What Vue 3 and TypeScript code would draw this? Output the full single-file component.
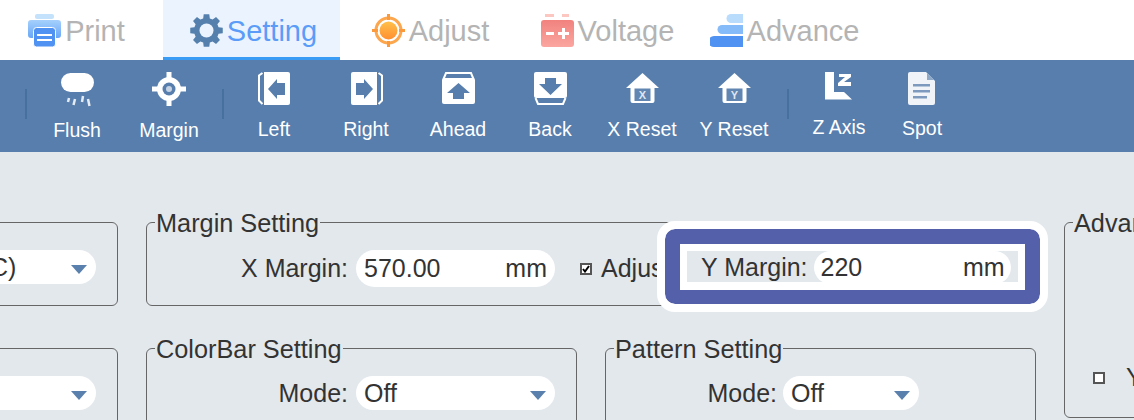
<script setup lang="ts">
const tabs = [
  { name: 'Print', icon: 'print' },
  { name: 'Setting', icon: 'gear' },
  { name: 'Adjust', icon: 'target' },
  { name: 'Voltage', icon: 'battery' },
  { name: 'Advance', icon: 'stack' },
]

const activeTab = 'Setting'

// one outline for the gear, eight teeth round a hub
function gearPath(): string {
  const pts: string[] = []
  const teeth = 8
  for (let i = 0; i < teeth; i++) {
    const a = (i * 2 * Math.PI) / teeth
    for (const [r, d] of [[12.5, -0.27], [16.5, -0.17], [16.5, 0.17], [12.5, 0.27]]) {
      pts.push(`${(16.5 + r * Math.cos(a + d)).toFixed(2)} ${(16.5 + r * Math.sin(a + d)).toFixed(2)}`)
    }
  }
  return 'M' + pts.join('L') + 'Z'
}
const gear = gearPath()
</script>

<template>
  <div class="page">
    <nav class="tabs">
      <div v-for="t in tabs" :key="t.name" class="tab" :class="{ active: t.name === activeTab }">
        <svg class="tab-icon" viewBox="0 0 33 33" width="33" height="33">
          <defs>
            <linearGradient id="bodyGrad" x1="0" y1="0" x2="0" y2="1">
              <stop offset="0" stop-color="#a5d0fc" />
              <stop offset="1" stop-color="#68a6f7" />
            </linearGradient>
            <linearGradient id="orangeGrad" x1="0" y1="0" x2="0" y2="1">
              <stop offset="0" stop-color="#ffc04a" />
              <stop offset="1" stop-color="#ff8f30" />
            </linearGradient>
            <linearGradient id="redGrad" x1="0" y1="0" x2="0" y2="1">
              <stop offset="0" stop-color="#f1827e" />
              <stop offset="1" stop-color="#fba6a0" />
            </linearGradient>
          </defs>
          <template v-if="t.icon === 'print'">
            <rect x="7" y="0" width="19" height="5" rx="2" fill="#c4e2fc" />
            <path d="M3 6h27a3 3 0 0 1 3 3v12a3 3 0 0 1-3 3h-3v-6H6v6H3a3 3 0 0 1-3-3V9a3 3 0 0 1 3-3z" fill="url(#bodyGrad)" />
            <rect x="5.500" y="13.500" width="22" height="19.500" rx="3" fill="#4f92f2" stroke="#fff" />
            <rect x="9" y="20" width="15" height="2" fill="#fff" />
            <rect x="9" y="25" width="15" height="2" fill="#fff" />
          </template>
          <template v-else-if="t.icon === 'gear'">
            <path :d="gear" fill="#5580ad" />
            <circle cx="16.500" cy="16.500" r="7" fill="#ebf4fe" />
          </template>
          <template v-else-if="t.icon === 'target'">
            <circle cx="16.500" cy="16.500" r="12.500" fill="none" stroke="#fca64e" stroke-width="3" />
            <circle cx="16.500" cy="16.500" r="9" fill="url(#orangeGrad)" />
            <path d="M15 0h3v6h-3zM15 27h3v6h-3zM0 15h6v3H0zM27 15h6v3h-6z" fill="#fb9a3c" />
          </template>
          <template v-else-if="t.icon === 'battery'">
            <rect x="4" y="0" width="9" height="3" fill="#fcc7c0" />
            <rect x="21" y="0" width="7" height="3" fill="#fcc7c0" />
            <rect x="0" y="6" width="33" height="27" rx="3" fill="url(#redGrad)" />
            <rect x="5" y="18" width="8" height="3" fill="#fff" />
            <path d="M17 18h4v-4h3v4h4v3h-4v4h-3v-4h-4z" fill="#fff" />
          </template>
          <template v-else>
            <path d="M21 0h12v9H21a4.500 4.500 0 0 1 0-9z" fill="#b9dcfd" />
            <path d="M12 11h21v9H12a4.500 4.500 0 0 1 0-9z" fill="#86bbf9" />
            <path d="M4 22h29v11H4a4 4 0 0 1 0-11z" fill="#4f92f2" />
          </template>
        </svg>
        <span class="tab-name">{{ t.name }}</span>
      </div>
    </nav>

    <div class="toolbar">
      <i class="sep"></i>
      <div class="tool">
        <svg viewBox="0 0 33 36" width="33" height="36">
          <rect x="0" y="2" width="33" height="19" rx="9.500" fill="#fff" />
          <path d="M8 27l-1 4M14 28l-1.500 6M22 25l-1 6M27 28l1.500 7" stroke="#e4ebf3" stroke-width="2.500" fill="none" />
        </svg>
        <span class="low">Flush</span>
      </div>
      <div class="tool">
        <svg viewBox="0 0 36 36" width="36" height="36">
          <circle cx="18" cy="18" r="12" fill="#fff" />
          <circle cx="18" cy="18" r="6.500" fill="#577ead" />
          <circle cx="18" cy="18" r="3" fill="#c5d3e4" />
          <path d="M15.500 1h5v7h-5zM15.500 28h5v7h-5zM1 15.500h7v5H1zM28 15.500h7v5h-7z" fill="#fff" />
        </svg>
        <span class="low">Margin</span>
      </div>
      <i class="sep"></i>
      <div class="tool">
        <svg viewBox="0 0 33 36" width="33" height="36">
          <path d="M6 1h24a2 2 0 0 1 2 2v29a2 2 0 0 1-2 2H6z" fill="#fff" />
          <path d="M4.500 2L1 4.500v25L4.500 33" fill="none" stroke="#fff" stroke-width="2" />
          <path d="M10 18l9-10v4h8v12h-8v4z" fill="#577ead" />
        </svg>
        <span>Left</span>
      </div>
      <div class="tool">
        <svg viewBox="0 0 33 36" width="33" height="36">
          <path d="M27 1H3a2 2 0 0 0-2 2v29a2 2 0 0 0 2 2h24z" fill="#fff" />
          <path d="M28.500 2L32 4.500v25L28.500 33" fill="none" stroke="#fff" stroke-width="2" />
          <path d="M23 18l-9-10v4H6v12h8v4z" fill="#577ead" />
        </svg>
        <span>Right</span>
      </div>
      <div class="tool">
        <svg viewBox="0 0 33 36" width="33" height="36">
          <path d="M1.500 8L4 2h25l2.500 6" fill="none" stroke="#fff" stroke-width="2" />
          <path d="M0 9a2 2 0 0 1 2-2h29a2 2 0 0 1 2 2v22a2 2 0 0 1-2 2H2a2 2 0 0 1-2-2z" fill="#fff" />
          <path d="M16.500 12L28 22h-6v6H11v-6H5z" fill="#577ead" />
        </svg>
        <span>Ahead</span>
      </div>
      <div class="tool">
        <svg viewBox="0 0 33 36" width="33" height="36">
          <path d="M1.500 27L4 33h25l2.500-6" fill="none" stroke="#fff" stroke-width="2" />
          <path d="M0 3a2 2 0 0 1 2-2h29a2 2 0 0 1 2 2v22a2 2 0 0 1-2 2H2a2 2 0 0 1-2-2z" fill="#fff" />
          <path d="M16.500 24L5 13h6V7h11v6h6z" fill="#577ead" />
        </svg>
        <span>Back</span>
      </div>
      <div class="tool">
        <svg viewBox="0 0 33 36" width="33" height="36">
          <path d="M16.500 2L33 17h-4.500v13a2 2 0 0 1-2 2h-20a2 2 0 0 1-2-2V17H0z" fill="#fff" />
          <rect x="8.500" y="17.500" width="16" height="12.500" fill="#6286b2" />
          <text x="16.500" y="28" class="badge">X</text>
        </svg>
        <span>X Reset</span>
      </div>
      <div class="tool">
        <svg viewBox="0 0 33 36" width="33" height="36">
          <path d="M16.500 2L33 17h-4.500v13a2 2 0 0 1-2 2h-20a2 2 0 0 1-2-2V17H0z" fill="#fff" />
          <rect x="8.500" y="17.500" width="16" height="12.500" fill="#6286b2" />
          <text x="16.500" y="28" class="badge">Y</text>
        </svg>
        <span>Y Reset</span>
      </div>
      <i class="sep"></i>
      <div class="tool">
        <svg viewBox="0 0 28 36" width="28" height="36">
          <path d="M0 1h9v20h10l8 7.500H0z" fill="#fff" />
          <path d="M14 3h12v3l-7 5h7v4H13v-3l7-6h-6z" fill="#fff" />
        </svg>
        <span class="up">Z Axis</span>
      </div>
      <div class="tool short">
        <svg viewBox="0 0 28 36" width="28" height="36">
          <path d="M2 1h16l9 9v22a2 2 0 0 1-2 2H2a2 2 0 0 1-2-2V3a2 2 0 0 1 2-2z" fill="#f0f3f8" />
          <path d="M19 2l7 7h-7z" fill="#8ea8c8" />
          <path d="M5 13h17v2.500H5zM5 19h17v2.500H5zM5 25h14v2.500H5z" fill="#7d99bd" />
        </svg>
        <span>Spot</span>
      </div>
    </div>

    <main class="content">
      <fieldset class="panel col-left">
        <legend>Model</legend>
        <div class="row">
          <div class="pill select left-pill"><span>C)</span><b class="arrow"></b></div>
        </div>
      </fieldset>

      <fieldset class="panel col-wide">
        <legend>Margin Setting</legend>
        <div class="row">
          <label class="field-label">X Margin:</label>
          <div class="pill number"><span>570.00</span><span>mm</span></div>
          <span class="check on">
            <svg viewBox="0 0 8 8" width="8" height="8"><path d="M1 4l2 2.500L7 1" fill="none" stroke="#000" stroke-width="2" /></svg>
          </span>
          <span class="check-text">Adjust</span>
        </div>
      </fieldset>

      <fieldset class="panel col-adv">
        <legend>Advanced Setting</legend>
        <div class="adv-row">
          <span class="check off"></span>
          <span class="adv-text">Y Offset</span>
        </div>
      </fieldset>

      <fieldset class="panel col-left">
        <legend>Mode</legend>
        <div class="row">
          <div class="pill select left-pill"><span></span><b class="arrow"></b></div>
        </div>
      </fieldset>

      <fieldset class="panel">
        <legend>ColorBar Setting</legend>
        <div class="row">
          <label class="field-label">Mode:</label>
          <div class="pill select wide"><span>Off</span><b class="arrow"></b></div>
        </div>
      </fieldset>

      <fieldset class="panel">
        <legend>Pattern Setting</legend>
        <div class="row">
          <label class="field-label short-label">Mode:</label>
          <div class="pill select narrow"><span>Off</span><b class="arrow"></b></div>
        </div>
      </fieldset>

      <div class="highlight">
        <div class="highlight-inner">
          <div class="y-row">
            <label>Y Margin:</label>
            <div class="pill y-pill"><span>220</span><span>mm</span></div>
          </div>
        </div>
      </div>
    </main>
  </div>
</template>

<style>
html,
body {
  margin: 0;
  overflow: hidden;
}
</style>

<style scoped>
.page {
  width: 1134px;
  height: 420px;
  overflow: hidden;
  background: #e3e8ed;
  font-family: "Liberation Sans", Arial, sans-serif;
  color: #333;
}

.tabs {
  display: flex;
  height: 60px;
  margin-left: -14px;
  background: #fff;
}

.tab {
  box-sizing: border-box;
  flex: 0 0 177px;
  height: 60px;
  display: flex;
  align-items: center;
  justify-content: center;
  gap: 4px;
  padding: 1px 0 0 4px;
  font-size: 29px;
  color: #b4b4b4;
}

.tab.active {
  background: #ebf4fe;
  box-shadow: inset 0 -3px 0 #3a9cf5;
  color: #5a9cf8;
}

.tab-icon {
  flex: none;
}

.tab-name {
  padding-top: 2px;
}

.toolbar {
  box-sizing: border-box;
  height: 92px;
  background: #577ead;
  display: flex;
  align-items: flex-start;
  padding-left: 18px;
  color: #fff;
  font-size: 19.5px;
}

.sep {
  flex: none;
  width: 2px;
  height: 30px;
  margin: 29px 4px 0 7px;
  background: #48709f;
}

.tool {
  flex: 0 0 92px;
  display: flex;
  flex-direction: column;
  align-items: center;
  padding-top: 11px;
}

.tool svg {
  display: block;
}

.tool span {
  margin-top: 11px;
  line-height: 22px;
}

.tool span.low {
  margin-top: 12px;
}

.tool span.up {
  margin-top: 9px;
}

.tool.short {
  flex-basis: 74px;
}

.tool.short span {
  margin-top: 10px;
}

.badge {
  font-size: 11px;
  font-weight: 700;
  fill: #dfe7f0;
  text-anchor: middle;
}

.content {
  position: relative;
  display: grid;
  grid-template-columns: 218px 431px 431px 200px;
  grid-template-rows: 99px 110px;
  gap: 27px 28px;
  margin-left: -100px;
  padding-top: 55px;
}

.panel {
  box-sizing: border-box;
  min-width: 0;
  margin: 0;
  padding: 0;
  border: 1px solid #666;
  border-radius: 6px;
  font-size: 25px;
}

.panel legend {
  margin-left: 8px;
  padding: 2px 1px 0;
  line-height: 28px;
  font-size: 25.3px;
  white-space: nowrap;
}

.col-left legend {
  visibility: hidden;
}

.col-wide {
  grid-column: span 2;
}

.col-adv {
  grid-column: 4;
  grid-row: 1 / span 2;
  height: 211px;
}

.row {
  display: flex;
  align-items: center;
  padding-top: 13px;
}

.field-label {
  flex: 0 0 201px;
  text-align: right;
}

.short-label {
  flex-basis: 171px;
}

.pill {
  box-sizing: border-box;
  display: flex;
  align-items: center;
  justify-content: space-between;
  background: #fff;
  border-radius: 19px;
  padding: 0 8px;
}

.select {
  height: 34px;
  margin-left: 7px;
}

.number {
  width: 199px;
  height: 37px;
  margin-left: 8px;
}

.wide {
  width: 199px;
  margin-left: 8px;
}

.narrow {
  width: 136px;
  margin-left: 6px;
}

.left-pill {
  width: 189px;
  margin-left: 6px;
  padding-left: 83px;
}

.arrow {
  flex: none;
  width: 0;
  height: 0;
  margin: 4px 1px 0 0;
  border-left: 8px solid transparent;
  border-right: 8px solid transparent;
  border-top: 9px solid #5a80ad;
}

.check {
  box-sizing: border-box;
  flex: none;
  display: flex;
  align-items: center;
  justify-content: center;
  width: 12px;
  height: 12px;
  background: #fff;
  border: 2px solid #555;
}

.check.on {
  margin-left: 25px;
}

.check-text {
  margin-left: 9px;
}

.adv-row {
  display: flex;
  align-items: center;
  gap: 21px;
  padding: 126px 0 0 28px;
}

.adv-text {
  white-space: nowrap;
}

.highlight {
  position: absolute;
  left: 757px;
  top: 69px;
  box-sizing: border-box;
  width: 391px;
  height: 91px;
  padding: 15px;
  background: #5460aa;
  background-clip: padding-box;
  border: 8px solid #fff;
  border-radius: 18px;
}

.highlight-inner {
  box-sizing: border-box;
  height: 46px;
  padding: 7px;
  background: #fff;
}

.y-row {
  box-sizing: border-box;
  display: flex;
  align-items: center;
  height: 31px;
  background: #e3e8ed;
  font-size: 25px;
  padding: 2px 0 0 14px;
}

.y-pill {
  width: 197px;
  height: 33px;
  margin-left: 6px;
  flex: none;
  padding: 0 6px 0 7px;
}
</style>
